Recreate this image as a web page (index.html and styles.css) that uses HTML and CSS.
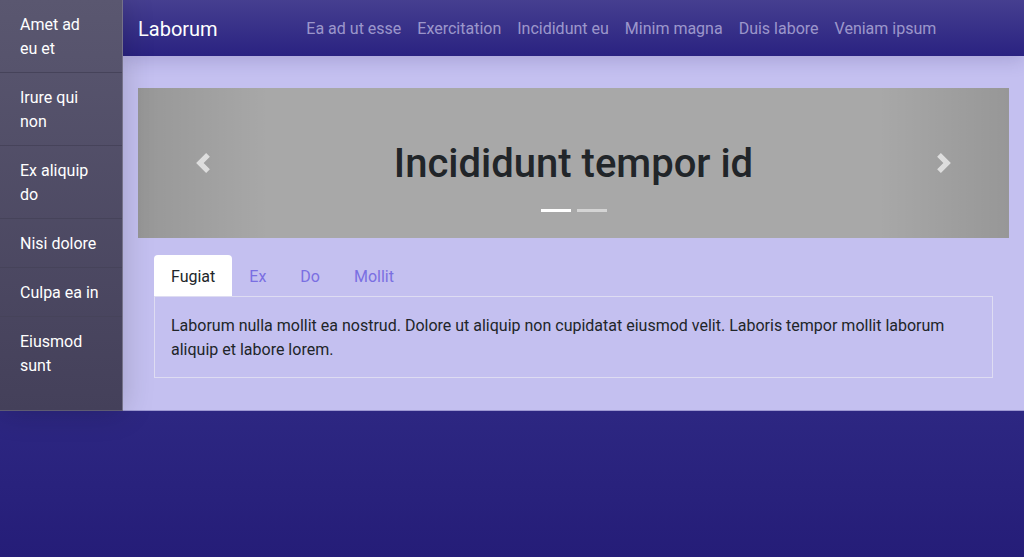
FILE: index.html
```html
<!DOCTYPE html>
<html lang="en">
<head>
<meta charset="utf-8">
<title>Laborum</title>
<link rel="stylesheet" href="styles.css">
</head>
<body>
<div class="app">
  <aside class="sidebar">
    <a class="side-item" href="#">Amet ad eu et</a>
    <a class="side-item" href="#">Irure qui non</a>
    <a class="side-item" href="#">Ex aliquip do</a>
    <a class="side-item" href="#">Nisi dolore</a>
    <a class="side-item" href="#">Culpa ea in</a>
    <a class="side-item" href="#">Eiusmod sunt</a>
  </aside>
  <div class="main">
    <nav class="navbar">
      <a class="brand" href="#">Laborum</a>
      <div class="nav-links">
        <a class="nav-link" href="#">Ea ad ut esse</a>
        <a class="nav-link" href="#">Exercitation</a>
        <a class="nav-link" href="#">Incididunt eu</a>
        <a class="nav-link" href="#">Minim magna</a>
        <a class="nav-link" href="#">Duis labore</a>
        <a class="nav-link" href="#">Veniam ipsum</a>
      </div>
    </nav>
    <div class="content">
      <div class="carousel">
        <h1 class="slide-title">Incididunt tempor id</h1>
        <a class="control control-prev" href="#">
          <svg class="chev" viewBox="0 0 8 8" width="20" height="20"><path d="M5.25 0l-4 4 4 4 1.5-1.5L4.25 4l2.5-2.5L5.25 0z" fill="#fff"/></svg>
        </a>
        <a class="control control-next" href="#">
          <svg class="chev" viewBox="0 0 8 8" width="20" height="20"><path d="M2.75 0l-1.5 1.5L3.75 4l-2.5 2.5L2.75 8l4-4-4-4z" fill="#fff"/></svg>
        </a>
        <div class="indicators">
          <span class="ind active"></span>
          <span class="ind"></span>
        </div>
      </div>
      <div class="tabs">
        <div class="tab-nav">
          <a class="tab active" href="#">Fugiat</a>
          <a class="tab" href="#">Ex</a>
          <a class="tab" href="#">Do</a>
          <a class="tab" href="#">Mollit</a>
        </div>
        <div class="tab-pane">
          Laborum nulla mollit ea nostrud. Dolore ut aliquip non cupidatat eiusmod velit. Laboris tempor mollit laborum aliquip et labore lorem.
        </div>
      </div>
    </div>
  </div>
</div>
</body>
</html>
```

FILE: styles.css
```css
* { box-sizing: border-box; }
html, body { margin: 0; padding: 0; }
body {
  min-height: 100vh;
  font-family: Roboto, "Noto Sans", sans-serif;
  font-size: 16px;
  line-height: 24px;
  color: #212529;
  background: linear-gradient(to bottom, #2f2985 0%, #2d2782 74%, #251d78 100%);
}
a { text-decoration: none; }

.app {
  display: flex;
  align-items: stretch;
}

.sidebar {
  width: 123px;
  flex: none;
  display: flex;
  flex-direction: column;
  background: linear-gradient(to bottom, #5a5770 0%, #44405a 100%);
  border-right: 1px solid #75728a;
  border-bottom: 1px solid #5e5b72;
  box-shadow: 0 0 30px rgba(0, 0, 0, 0.18);
  position: relative;
  z-index: 2;
}
.side-item {
  display: block;
  padding: 13px 23px 11px 20px;
  color: #fff;
  border-bottom: 1px solid #46435a;
}
.side-item:last-child { border-bottom: 0; }

.main {
  flex: 1;
  min-width: 0;
  background: #c4c0f0;
  border-bottom: 1px solid #9c98d2;
}

.navbar {
  height: 56px;
  display: flex;
  align-items: center;
  padding: 2px 15px 0;
  background: linear-gradient(to bottom, #463f90 0%, #2a2281 100%);
  box-shadow: 0 4px 18px rgba(40, 30, 100, 0.18);
  position: relative;
  z-index: 1;
}
.brand {
  color: #fff;
  font-size: 20px;
  line-height: 30px;
  margin-right: 16px;
}
.nav-links {
  flex: 1;
  display: flex;
  justify-content: center;
}
.nav-link {
  padding: 0 8px;
  color: rgba(232, 228, 255, 0.58);
}

.content {
  padding: 32px 15px 32px;
}

.carousel {
  position: relative;
  height: 150px;
  background: #a8a8a8;
  display: flex;
  align-items: center;
  justify-content: center;
}
.slide-title {
  margin: 0;
  font-size: 40px;
  line-height: 48px;
  font-weight: 500;
  color: #212529;
  padding-top: 1px;
}
.control {
  position: absolute;
  top: 0;
  bottom: 0;
  width: 15%;
  display: flex;
  align-items: center;
  justify-content: center;
}
.control-prev {
  left: 0;
  background: linear-gradient(to right, rgba(0, 0, 0, 0.1), rgba(0, 0, 0, 0));
}
.control-next {
  right: 0;
  background: linear-gradient(to left, rgba(0, 0, 0, 0.1), rgba(0, 0, 0, 0));
}
.chev { opacity: 0.65; display: block; }

.indicators {
  position: absolute;
  left: 0;
  right: 0;
  bottom: 26px;
  display: flex;
  justify-content: center;
  gap: 6px;
}
.ind {
  width: 30px;
  height: 3px;
  background: #fff;
  opacity: 0.5;
}
.ind.active { opacity: 1; }

.tabs {
  margin: 17px 16px 0;
}
.tab-nav {
  display: flex;
}
.tab {
  padding: 9px 16px 7px;
  border: 1px solid transparent;
  border-bottom: 0;
  border-radius: 4px 4px 0 0;
  color: #7a6fe2;
}
.tab.active {
  background: #fff;
  color: #212529;
}
.tab-pane {
  border: 1px solid #dedcf2;
  padding: 17px 16px 15px;
  color: #212529;
}
```
